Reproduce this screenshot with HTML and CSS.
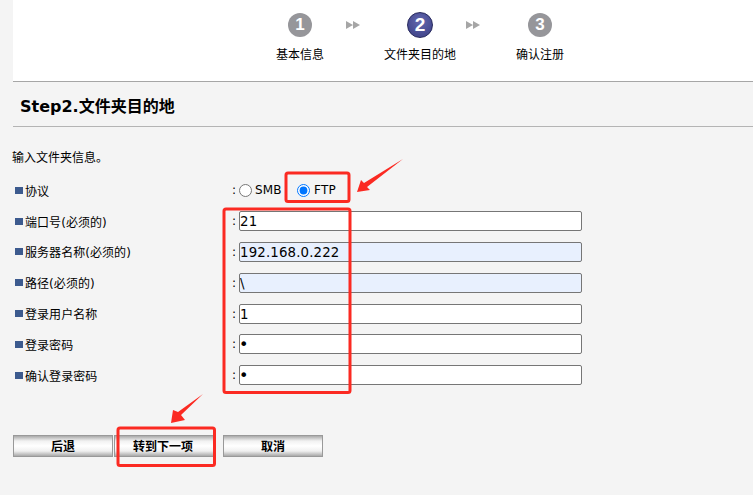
FILE: index.html
```html
<!DOCTYPE html>
<html lang="zh">
<head>
<meta charset="utf-8">
<title>Step2</title>
<link rel="stylesheet" href="styles.css">
</head>
<body>
<div class="page">
  <header class="steps">
    <div class="step">
      <span class="num">1</span>
      <span class="step-label">基本信息</span>
    </div>
    <svg class="next" width="14" height="8" viewBox="0 0 14 8"><path d="M0 0l7 4-7 4zM7 0l7 4-7 4z"/></svg>
    <div class="step">
      <span class="num num-active">2</span>
      <span class="step-label">文件夹目的地</span>
    </div>
    <svg class="next" width="14" height="8" viewBox="0 0 14 8"><path d="M0 0l7 4-7 4zM7 0l7 4-7 4z"/></svg>
    <div class="step">
      <span class="num">3</span>
      <span class="step-label">确认注册</span>
    </div>
  </header>
  <h1 class="title">Step2.文件夹目的地</h1>
  <p class="intro">输入文件夹信息。</p>
  <form class="form">
    <div class="row">
      <span class="label">协议</span>
      <span class="colon">:</span>
      <label class="radio radio-smb"><input type="radio" name="p">SMB</label>
      <label class="radio radio-ftp"><input type="radio" name="p" checked>FTP</label>
    </div>
    <div class="row">
      <span class="label">端口号(必须的)</span>
      <span class="colon">:</span>
      <input class="field" type="text" value="21">
    </div>
    <div class="row">
      <span class="label">服务器名称(必须的)</span>
      <span class="colon">:</span>
      <input class="field field-fill" type="text" value="192.168.0.222">
    </div>
    <div class="row">
      <span class="label">路径(必须的)</span>
      <span class="colon">:</span>
      <input class="field field-fill" type="text" value="\">
    </div>
    <div class="row">
      <span class="label">登录用户名称</span>
      <span class="colon">:</span>
      <input class="field" type="text" value="1">
    </div>
    <div class="row">
      <span class="label">登录密码</span>
      <span class="colon">:</span>
      <input class="field field-secret" type="password" value="1">
    </div>
    <div class="row">
      <span class="label">确认登录密码</span>
      <span class="colon">:</span>
      <input class="field field-secret" type="password" value="1">
    </div>
    <div class="buttons">
      <button class="btn" type="button">后退</button>
      <button class="btn btn-next" type="button">转到下一项</button>
      <button class="btn" type="button">取消</button>
    </div>
  </form>
  <svg class="marks" width="753" height="495" viewBox="0 0 753 495">
    <g fill="none" stroke="#fb2a22" stroke-width="3">
      <rect x="286" y="173" width="63" height="28.5" rx="2"/>
      <rect x="224" y="209" width="126" height="183.5" rx="2"/>
      <rect x="118" y="428" width="96.5" height="37.5" rx="2"/>
    </g>
    <g fill="#fb2a22">
      <path d="M403 159L367 187 370 190 357 192 361 180 364 183z"/>
      <path d="M203 394L181 415 185 420 171 423 173 410 178 412z"/>
    </g>
  </svg>
</div>
</body>
</html>
```
FILE: styles.css
```css
* { box-sizing: border-box; }
html, body { margin: 0; padding: 0; }
body {
  background: #f4f4f4;
  font-family: "DejaVu Sans", "Noto Sans CJK SC", sans-serif;
  font-size: 12px;
  color: #000;
}
.page {
  position: relative;
  width: 753px;
  height: 495px;
  overflow: hidden;
  padding-left: 13px;
}
.steps {
  display: flex;
  height: 82px;
  padding-top: 12px;
  padding-left: 251px;
  background: #fff;
  border-bottom: 1px solid #a6a6a6;
  align-items: flex-start;
}
.step {
  width: 72px;
  display: flex;
  flex-direction: column;
  align-items: center;
}
.num {
  width: 24px;
  height: 24px;
  margin-top: 1px;
  margin-bottom: 8px;
  border-radius: 50%;
  background: #96969a;
  color: #fff;
  font: bold 17px/24px "Liberation Sans", sans-serif;
  text-align: center;
}
.num-active {
  width: 26px;
  height: 26px;
  margin-top: 0;
  margin-bottom: 7px;
  border: 1px solid #26285c;
  background: radial-gradient(circle at 50% 35%, #6469b0, #45498f 70%);
  font-size: 19px;
}
.step-label {
  font-family: "Noto Sans CJK SC", sans-serif;
  font-size: 12px;
  line-height: 18px;
  white-space: nowrap;
}
.next {
  fill: #a6a6a6;
  margin: 9px 24px 0 10px;
}
.title {
  margin: 0;
  height: 45px;
  padding: 14px 0 0 7px;
  border-bottom: 1px solid #b4b4b4;
  font: bold 16px/22px "DejaVu Sans", "Noto Sans CJK SC", sans-serif;
}
.intro {
  margin: 0 0 0 -1px;
  padding-top: 21px;
  height: 48px;
  font-family: "Noto Sans CJK SC", sans-serif;
  line-height: 18px;
}
.form { display: flex; flex-direction: column; }
.row {
  display: flex;
  align-items: center;
  height: 30.8px;
}
.label {
  width: 219px;
  display: flex;
  align-items: center;
  padding-left: 2px;
  letter-spacing: 0.05px;
  font-family: "DejaVu Sans", "Noto Sans CJK SC", sans-serif;
  font-size: 12px;
}
.label::before {
  content: "";
  width: 8px;
  height: 7px;
  margin-right: 2px;
  background: #3c5a8e;
}
.colon { width: 7px; }
.radio {
  display: flex;
  align-items: center;
  letter-spacing: 0.2px;
}
.radio input { margin: 0 3px 0 0; width: 13px; height: 13px; }
.radio-ftp input { margin-right: 4px; }
.radio-smb { width: 58px; }
.field {
  width: 343px;
  height: 20px;
  padding: 1px 0 0;
  border: 1px solid #767676;
  border-radius: 2px;
  background: #fff;
  font-family: "DejaVu Sans", sans-serif;
  font-size: 13.33px;
  letter-spacing: 0.15px;
  color: #000;
}
.field-fill { background: #e8f0fe; }
.field-secret { font-size: 16px; letter-spacing: 0; text-indent: -1px; }
.buttons {
  display: flex;
  margin-top: 44px;
}
.btn {
  width: 100px;
  height: 22px;
  padding: 0;
  border: 1px solid #999;
  background: linear-gradient(#a9a9a9, #f2f2f2 25%, #fff 50%, #f0f0f0 75%, #a9a9a9);
  font: bold 12px/20px "Noto Sans CJK SC", sans-serif;
  color: #000;
}
.btn-next { margin: 0 9px 0 1px; padding-right: 2px; }
.marks {
  position: absolute;
  left: 0;
  top: 0;
  pointer-events: none;
}
```
